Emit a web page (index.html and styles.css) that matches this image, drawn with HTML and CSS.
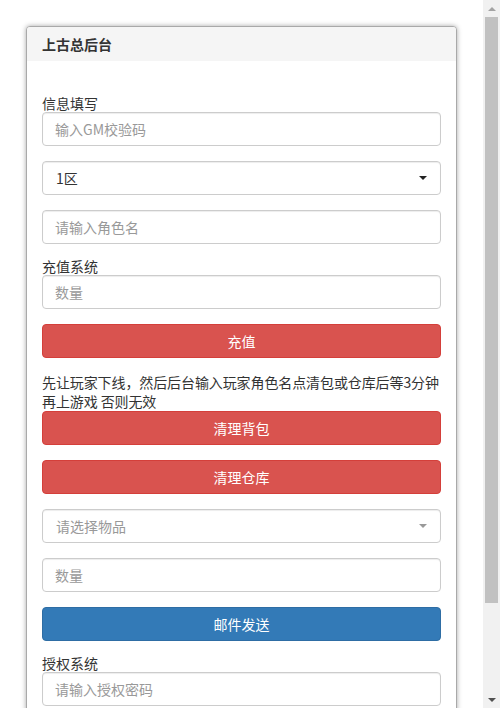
FILE: index.html
```html
<!DOCTYPE html>
<html lang="zh-CN">
<head>
<meta charset="utf-8">
<title>上古总后台</title>
<link rel="stylesheet" href="styles.css">
</head>
<body>
<div class="window">
  <div class="viewport">
    <div class="page">
      <div class="panel">
        <div class="panel-heading">上古总后台</div>
        <div class="panel-body">
          <label class="lbl">信息填写</label>
          <div class="group"><input class="control" type="text" placeholder="输入GM校验码"></div>
          <div class="group">
            <div class="select">
              <span class="select-text">1区</span>
              <span class="caret"></span>
            </div>
          </div>
          <div class="group"><input class="control" type="text" placeholder="请输入角色名"></div>

          <label class="lbl">充值系统</label>
          <div class="group"><input class="control" type="text" placeholder="数量"></div>
          <div class="group"><button class="btn btn-danger">充值</button></div>

          <p class="note">先让玩家下线，然后后台输入玩家角色名点清包或仓库后等3分钟<br>再上游戏 否则无效</p>
          <div class="group"><button class="btn btn-danger">清理背包</button></div>
          <div class="group"><button class="btn btn-danger">清理仓库</button></div>

          <div class="group">
            <div class="select">
              <span class="select-text placeholder">请选择物品</span>
              <span class="caret light"></span>
            </div>
          </div>
          <div class="group"><input class="control" type="text" placeholder="数量"></div>
          <div class="group"><button class="btn btn-primary">邮件发送</button></div>

          <label class="lbl">授权系统</label>
          <div class="group last"><input class="control" type="text" placeholder="请输入授权密码"></div>
        </div>
      </div>
    </div>
  </div>
  <div class="scrollbar">
    <div class="sb-btn"><span class="arrow-up"></span></div>
    <div class="sb-track"><div class="sb-thumb"></div></div>
    <div class="sb-btn"><span class="arrow-down"></span></div>
  </div>
</div>
</body>
</html>
```

FILE: styles.css
```css
html,
body {
  margin: 0;
  height: 100%;
  overflow: hidden;
}

body {
  font-family: "Noto Sans CJK SC", "Noto Sans", "Liberation Sans", sans-serif;
  font-size: 14px;
  color: #333;
  background: #fff;
}

.window {
  display: flex;
  height: 708px;
}

.viewport {
  flex: 1;
  min-width: 0;
  overflow: hidden;
}

/* scrollbar chrome */
.scrollbar {
  width: 17px;
  flex: none;
  display: flex;
  flex-direction: column;
  background: #f1f1f1;
}

.sb-btn {
  height: 17px;
  flex: none;
  display: flex;
  align-items: center;
  justify-content: center;
}

.arrow-up {
  width: 0;
  height: 0;
  border-left: 4px solid transparent;
  border-right: 4px solid transparent;
  border-bottom: 4px solid #a3a3a3;
}

.arrow-down {
  width: 0;
  height: 0;
  border-left: 4px solid transparent;
  border-right: 4px solid transparent;
  border-top: 4px solid #505050;
}

.sb-track {
  flex: 1;
  padding: 0 2px;
}

.sb-thumb {
  height: 586px;
  background: #c1c1c1;
}

/* page */
.page {
  padding: 26px 26px 45px 26px;
}

.panel {
  border: 1px solid #a9a9a9;
  border-radius: 4px;
  box-shadow: 0 0 5px rgba(0, 0, 0, 0.35);
  background: #fff;
  overflow: hidden;
}

.panel-heading {
  background: #f5f5f5;
  padding: 7px 15px;
  line-height: 20px;
  font-weight: bold;
  color: #333;
}

.panel-body {
  padding: 35px 15px 15px;
}

.lbl {
  display: block;
  line-height: 15px;
  height: 16px;
}

.group {
  margin-bottom: 15px;
}

.group.last {
  margin-bottom: 0;
}

.control,
.select {
  display: block;
  box-sizing: border-box;
  width: 100%;
  height: 34px;
  padding: 6px 12px;
  border: 1px solid #ccc;
  border-radius: 4px;
  font-family: inherit;
  font-size: 14px;
  color: #555;
  background: #fff;
  box-shadow: inset 0 1px 1px rgba(0, 0, 0, 0.075);
}

.control::placeholder {
  color: #999;
}

.select {
  display: flex;
  align-items: center;
  justify-content: space-between;
  padding: 0 12px 0 13px;
}

.select-text {
  color: #333;
}

.select-text.placeholder {
  color: #999;
}

.caret {
  width: 0;
  height: 0;
  border-left: 4px solid transparent;
  border-right: 4px solid transparent;
  border-top: 4px solid #222;
  margin-right: 1px;
}

.caret.light {
  border-top-color: #999;
}

.btn {
  display: block;
  box-sizing: border-box;
  width: 100%;
  height: 34px;
  padding: 0 12px;
  border-radius: 4px;
  border: 1px solid transparent;
  font-family: inherit;
  font-size: 14px;
  color: #fff;
  line-height: 32px;
  text-align: center;
}

.btn-danger {
  background: #d9534f;
  border-color: #d43f3a;
}

.btn-primary {
  background: #337ab7;
  border-color: #2e6da4;
}

.note {
  margin: 0;
  line-height: 19px;
  color: #333;
  white-space: nowrap;
  letter-spacing: -0.1px;
}
```
